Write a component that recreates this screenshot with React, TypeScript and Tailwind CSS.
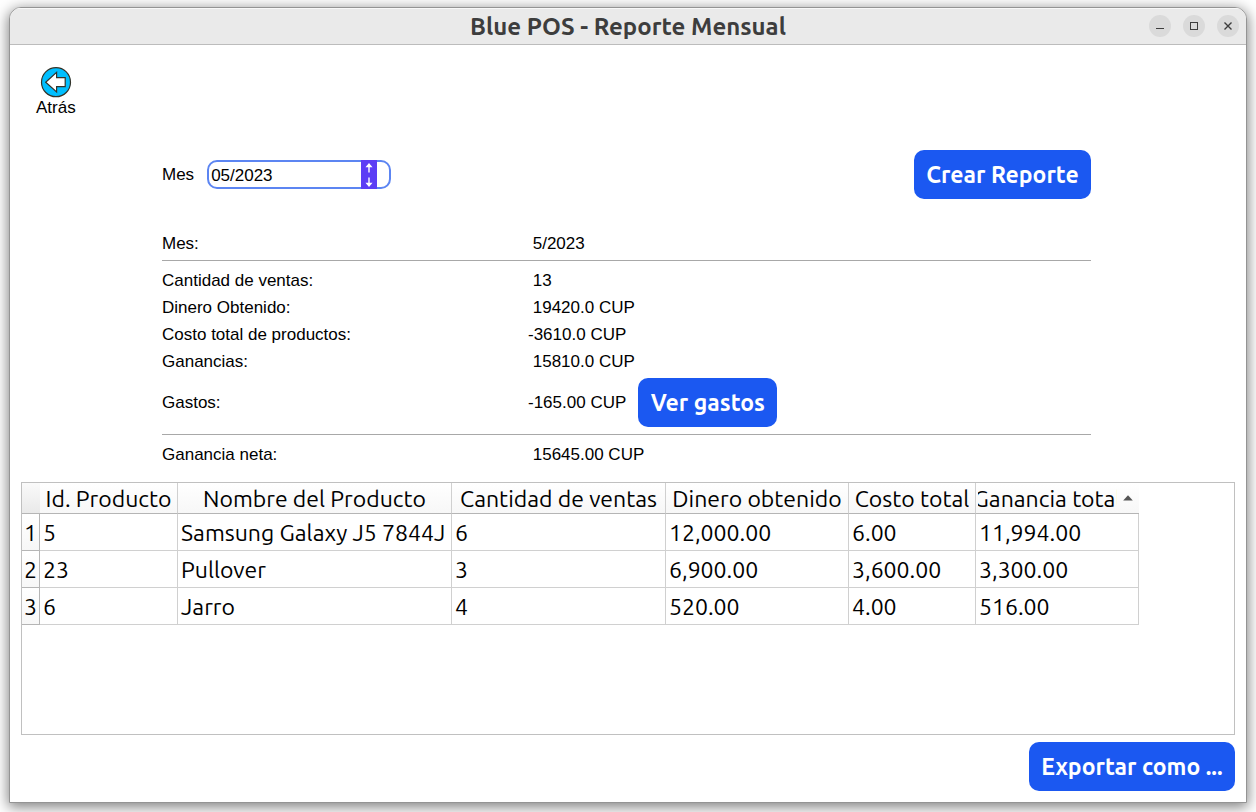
import { useState } from "react";
import type { ReactNode } from "react";

const uiFont = "font-['Ubuntu','Noto_Sans',sans-serif]";

const summary = [
  { label: "Cantidad de ventas:", value: " 13" },
  { label: "Dinero Obtenido:", value: " 19420.0 CUP" },
  { label: "Costo total de productos:", value: "-3610.0 CUP" },
  { label: "Ganancias:", value: " 15810.0 CUP" },
];

const columns = [
  { title: "Id. Producto", width: "w-[138px]" },
  { title: "Nombre del Producto", width: "w-[274px]" },
  { title: "Cantidad de ventas", width: "w-[214px]" },
  { title: "Dinero obtenido", width: "w-[183px]" },
  { title: "Costo total", width: "w-[127px]" },
];

const products = [
  ["5", "Samsung Galaxy J5 7844J", "6", "12,000.00", "6.00", "11,994.00"],
  ["23", "Pullover", "3", "6,900.00", "3,600.00", "3,300.00"],
  ["6", "Jarro", "4", "520.00", "4.00", "516.00"],
];

function ActionButton({ children, width }: { children: ReactNode; width: string }) {
  return (
    <button
      type="button"
      className={`h-[49px] shrink-0 whitespace-nowrap rounded-[10px] bg-[#1b58f1] text-[23px] leading-8 font-bold text-white font-['Ubuntu','Open_Sans',sans-serif] ${width}`}
    >
      {children}
    </button>
  );
}

function WindowButton({ label, children }: { label: string; children: ReactNode }) {
  return (
    <button
      type="button"
      aria-label={label}
      className="flex size-[22px] items-center justify-center rounded-full bg-[#dadada]"
    >
      <svg width="12" height="12" viewBox="0 0 12 12" fill="none" stroke="#3d3d3d">
        {children}
      </svg>
    </button>
  );
}

function SummaryRow({ label, value, children }: { label: string; value: string; children?: ReactNode }) {
  return (
    <div className="flex min-h-[27px] items-center">
      <dt className="w-[366px] shrink-0">{label}</dt>
      <dd className="flex items-center gap-3 whitespace-pre">
        {value}
        {children}
      </dd>
    </div>
  );
}

export default function App() {
  const [month, setMonth] = useState("05/2023");

  const shiftMonth = (step: number) => {
    const [m, y] = month.split("/").map(Number);
    const total = y * 12 + (m - 1) + step;
    setMonth(`${String((total % 12) + 1).padStart(2, "0")}/${Math.floor(total / 12)}`);
  };

  return (
    <div className="flex min-h-screen flex-col bg-white px-[9px] pt-[7px] pb-[9px] font-['Liberation_Sans',Arial,sans-serif] text-[17px] leading-5 text-black">
      <div className="flex flex-1 flex-col overflow-hidden rounded-t-xl border border-[#949494] bg-white shadow-[0_3px_14px_1px_rgba(0,0,0,0.5)]">
        <header className="grid h-[37px] grid-cols-[1fr_auto_1fr] items-center border-b border-[#bcbcbc] bg-[#eaeaea] shadow-[inset_0_1px_0_#f8f8f8]">
          <span />
          <h1 className="pt-0.5 text-[24px] leading-8 font-bold text-[#3d3d3d] font-['Ubuntu','Open_Sans',sans-serif]">
            Blue POS - Reporte Mensual
          </h1>
          <div className="flex justify-end gap-3 pr-[7px]">
            <WindowButton label="Minimizar">
              <path d="M2 8.5H10" />
            </WindowButton>
            <WindowButton label="Maximizar">
              <rect x="2.5" y="2.5" width="7" height="7" />
            </WindowButton>
            <WindowButton label="Cerrar">
              <path d="M2.5 2.5L9.5 9.5M9.5 2.5L2.5 9.5" strokeWidth="1.4" />
            </WindowButton>
          </div>
        </header>

        <main className="flex flex-1 flex-col px-[11px] pb-[11px]">
          <div className="flex pt-[22px] pl-[15px]">
            <button type="button" className="flex flex-col items-center">
              <svg width="32" height="31" viewBox="0 0 32 31">
                <circle cx="16" cy="15.2" r="14.5" fill="#00bfff" stroke="#33332a" strokeWidth="1.2" />
                <path
                  d="M5.7 15.2L16.6 5.4V10.6H25.2V19.6H16.6V24.9Z"
                  fill="#fff"
                  stroke="#33332a"
                  strokeWidth="1.2"
                />
              </svg>
              Atrás
            </button>
          </div>

          <section className="flex flex-col pt-8 pr-36 pl-[141px]">
            <div className="flex items-center">
              <label htmlFor="month">Mes</label>
              <div className="relative ml-[13px]">
                <input
                  id="month"
                  type="text"
                  value={month}
                  onChange={(e) => setMonth(e.target.value)}
                  className="block h-[29px] w-[184px] rounded-[10px] border-2 border-[#5c85f2] bg-white pt-0.5 pl-0.5 outline-none"
                />
                <div className="absolute top-0 right-[14px] flex h-[29px] w-4 flex-col bg-[#5c3df5] pt-px text-white">
                  <button
                    type="button"
                    aria-label="Mes siguiente"
                    onClick={() => shiftMonth(1)}
                    className="flex flex-1 items-center justify-center"
                  >
                    <svg width="8" height="10" viewBox="0 0 8 10">
                      <path d="M4 9.5V2" stroke="currentColor" strokeWidth="1.4" />
                      <path d="M4 0L7.5 4.2H0.5Z" fill="currentColor" />
                    </svg>
                  </button>
                  <button
                    type="button"
                    aria-label="Mes anterior"
                    onClick={() => shiftMonth(-1)}
                    className="flex flex-1 items-center justify-center"
                  >
                    <svg width="8" height="10" viewBox="0 0 8 10">
                      <path d="M4 0.5V8" stroke="currentColor" strokeWidth="1.4" />
                      <path d="M4 10L7.5 5.8H0.5Z" fill="currentColor" />
                    </svg>
                  </button>
                </div>
              </div>
              <div className="ml-auto">
                <ActionButton width="w-[177px]">Crear Reporte</ActionButton>
              </div>
            </div>

            <dl className="flex flex-col pt-[31px]">
              <SummaryRow label="Mes:" value=" 5/2023" />
              <hr className="mt-[3px] mb-1.5 border-[#a8a8a8]" />
              {summary.map((row) => (
                <SummaryRow key={row.label} label={row.label} value={row.value} />
              ))}
              <div className="py-[3px]">
                <SummaryRow label="Gastos:" value="-165.00 CUP">
                  <ActionButton width="w-[139px]">Ver gastos</ActionButton>
                </SummaryRow>
              </div>
              <hr className="mt-1 mb-1.5 border-[#a8a8a8]" />
              <SummaryRow label="Ganancia neta:" value=" 15645.00 CUP" />
            </dl>
          </section>

          <div className="mt-[14px] flex-1 overflow-hidden border border-[#c0c0c0]">
            <table className={`w-[1117px] table-fixed border-separate border-spacing-0 text-[23px] leading-7 whitespace-nowrap ${uiFont}`}>
              <thead>
                <tr className="h-[31px] bg-linear-to-b from-white to-[#f7f7f7]">
                  <td className="w-[18px] border-b border-[#b5b5b5] bg-linear-to-b from-[#fafafa] to-[#e9e9e9] p-0" />
                  {columns.map((column) => (
                    <th
                      key={column.title}
                      scope="col"
                      className={`border-r border-b border-r-[#d0d0d0] border-b-[#b5b5b5] px-0 pt-0.5 pb-0 font-normal ${column.width}`}
                    >
                      <div className="flex justify-center overflow-hidden">
                        <span className="shrink-0">{column.title}</span>
                      </div>
                    </th>
                  ))}
                  <th scope="col" aria-sort="ascending" className="w-[163px] border-b border-[#b5b5b5] px-0 pt-0.5 pb-0 font-normal">
                    <div className="flex items-center gap-1.5">
                      <span className="ml-0.5 flex w-[139px] justify-center overflow-hidden">
                        <span className="shrink-0">Ganancia total</span>
                      </span>
                      <svg className="mb-0.5" width="10" height="6" viewBox="0 0 10 6">
                        <path d="M5 0.2L9.8 5.5H0.2Z" fill="#555" />
                      </svg>
                    </div>
                  </th>
                </tr>
              </thead>
              <tbody>
                {products.map((cells, i) => (
                  <tr key={cells[0]} className="h-[37px]">
                    <th
                      scope="row"
                      className="border-r border-b border-[#b5b5b5] bg-linear-to-b from-white to-[#f7f7f7] px-0 pt-0.5 pb-0 text-center font-normal"
                    >
                      {i + 1}
                    </th>
                    {cells.map((cell, c) => (
                      <td
                        key={columns[c]?.title ?? "total"}
                        className="overflow-hidden border-r border-b border-[#d0d0d0] pt-0.5 pr-0 pb-0 pl-[3px]"
                      >
                        {cell}
                      </td>
                    ))}
                  </tr>
                ))}
              </tbody>
            </table>
          </div>

          <div className="mt-[7px] flex justify-end">
            <ActionButton width="w-[206px]">Exportar como ...</ActionButton>
          </div>
        </main>
      </div>
    </div>
  );
}
